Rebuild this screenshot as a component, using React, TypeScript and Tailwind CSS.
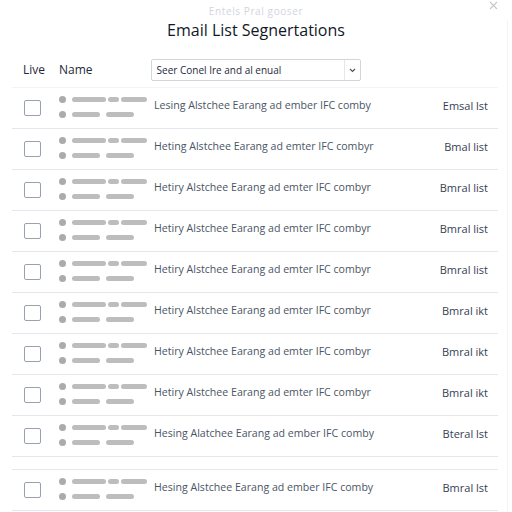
import React from "react";

const rows = [
  { t: "Lesing Alstchee Earang ad ember IFC comby", e: "Emsal lst" },
  { t: "Heting Alstchee Earang ad emter IFC combyr", e: "Bmal list" },
  { t: "Hetiry Alstchee Earang ad emter IFC combyr", e: "Bmral list" },
  { t: "Hetiry Alstchee Earang ad emter IFC combyr", e: "Bmral list" },
  { t: "Hetiry Alstchee Earang ad emter IFC combyr", e: "Bmral list" },
  { t: "Hetiry Alstchee Earang ad emter IFC combyr", e: "Bmral ikt" },
  { t: "Hetiry Alstchee Earang ad emter IFC combyr", e: "Bmral ikt" },
  { t: "Hetiry Alstchee Earang ad emter IFC combyr", e: "Bmral ikt" },
  { t: "Hesing Alatchee Earang ad ember IFC comby", e: "Bteral lst" },
];

function Row({ t, e }: { t: string; e: string }) {
  return (
    <div className="h-[41px] border-b border-gray-200 flex items-center">
      <div className="w-[17px] h-[16px] ml-[12px] border border-gray-400 rounded-[2px] bg-white" />
      <div className="ml-[18px] flex flex-col gap-[8px] -mt-[2px] blur-[0.6px]">
        <div className="flex items-center">
          <div className="w-[7px] h-[7px] rounded-full bg-[#ababab]" />
          <div className="ml-[6px] w-[34px] h-[5px] bg-[#bdbdbd] rounded-sm" />
          <div className="ml-[2px] w-[11px] h-[5px] bg-[#bdbdbd] rounded-sm" />
          <div className="ml-[2px] w-[26px] h-[5px] bg-[#bdbdbd] rounded-sm" />
        </div>
        <div className="flex items-center">
          <div className="w-[7px] h-[7px] rounded-full bg-[#ababab]" />
          <div className="ml-[6px] w-[28px] h-[5px] bg-[#bdbdbd] rounded-sm" />
          <div className="ml-[6px] w-[28px] h-[5px] bg-[#bdbdbd] rounded-sm" />
        </div>
      </div>
      <div className="ml-[7px] -mt-[4px] text-[10.6px] text-gray-600 whitespace-nowrap">{t}</div>
      <div className="ml-auto mr-[10px] -mt-[4px] text-[11px] text-gray-700 whitespace-nowrap">{e}</div>
    </div>
  );
}

export default function App() {
  return (
    <div
      className="w-[512px] h-[512px] bg-white relative overflow-hidden"
      style={{ fontFamily: '"Open Sans", "Noto Sans", sans-serif' }}
    >
      <svg className="absolute right-[14px] top-[1px]" width="9" height="9" viewBox="0 0 9 9" stroke="#c8c8c8" strokeWidth="1.1">
        <path d="M1 1l7 7M8 1l-7 7" />
      </svg>
      <div className="absolute right-[4px] top-[20px] bottom-0 w-px bg-gray-100" />
      <div className="pt-[4px] text-center text-[10px] tracking-[0.6px] text-gray-300 leading-[14px]">Entels Pral gooser</div>
      <div className="text-center text-[16px] text-gray-900 leading-[22px] mt-[1px]">Email List Segnertations</div>
      <div className="flex items-center h-[22px] mt-[18px]">
        <div className="ml-[23px] text-[12px] text-gray-800">Live</div>
        <div className="ml-[14px] text-[12px] text-gray-800">Name</div>
        <div className="ml-[58px] w-[210px] h-[22px] border border-gray-300 rounded-[2px] flex items-center">
          <div className="pl-[5px] flex-1 text-[10px] text-gray-800 whitespace-nowrap">Seer Conel Ire and al enual</div>
          <div className="w-[16px] h-full border-l border-gray-200 flex items-center justify-center">
            <svg width="7" height="5" viewBox="0 0 7 5" fill="none" stroke="#555" strokeWidth="1.2">
              <path d="M1 1l2.5 2.5L6 1" />
            </svg>
          </div>
        </div>
      </div>
      <div className="mx-[12px] w-[486px] mt-[6px] border-t border-gray-100">
        {rows.map((r, i) => (
          <Row key={i} t={r.t} e={r.e} />
        ))}
        <div className="h-[13px] border-b border-gray-200" />
        <Row t="Hesing Alstchee Earang ad ember IFC comby" e="Bmral lst" />
      </div>
    </div>
  );
}
